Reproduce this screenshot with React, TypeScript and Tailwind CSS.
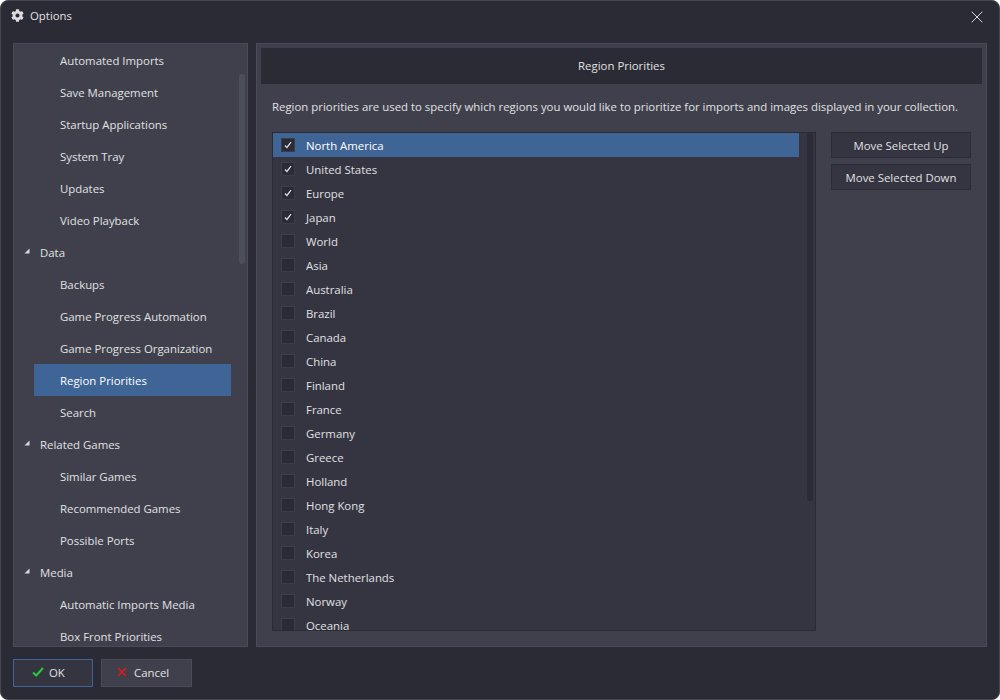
import { X } from "lucide-react";
import { FaCog } from "react-icons/fa";

const tree: { label: string; group?: boolean; selected?: boolean }[] = [
  { label: "Automated Imports" },
  { label: "Save Management" },
  { label: "Startup Applications" },
  { label: "System Tray" },
  { label: "Updates" },
  { label: "Video Playback" },
  { label: "Data", group: true },
  { label: "Backups" },
  { label: "Game Progress Automation" },
  { label: "Game Progress Organization" },
  { label: "Region Priorities", selected: true },
  { label: "Search" },
  { label: "Related Games", group: true },
  { label: "Similar Games" },
  { label: "Recommended Games" },
  { label: "Possible Ports" },
  { label: "Media", group: true },
  { label: "Automatic Imports Media" },
  { label: "Box Front Priorities" },
];

const regions = [
  "North America",
  "United States",
  "Europe",
  "Japan",
  "World",
  "Asia",
  "Australia",
  "Brazil",
  "Canada",
  "China",
  "Finland",
  "France",
  "Germany",
  "Greece",
  "Holland",
  "Hong Kong",
  "Italy",
  "Korea",
  "The Netherlands",
  "Norway",
  "Oceania",
];

function TreeRow({ label, group, selected }: { label: string; group?: boolean; selected?: boolean }) {
  if (group) {
    return (
      <div className="flex h-8 shrink-0 items-center pl-[10px] pt-[1px]">
        <svg width="6" height="6" viewBox="0 0 6 6" className="mr-[10px] mb-[3px]">
          <path d="M5.5 0.5V5.5H0.5Z" fill="#d8d8dc" />
        </svg>
        <span>{label}</span>
      </div>
    );
  }
  return (
    <div className={`ml-[20px] flex h-8 w-[197px] shrink-0 items-center pl-[26px] pt-[1px] ${selected ? "bg-[#3f6496] text-white" : ""}`}>
      {label}
    </div>
  );
}

function RegionRow({ label, checked, selected }: { label: string; checked: boolean; selected: boolean }) {
  return (
    <div className={`flex h-6 w-[526px] shrink-0 items-center pl-[8px] ${selected ? "bg-[#3f6496] text-white" : ""}`}>
      <div className="grid h-[14px] w-[14px] place-items-center border border-[#3c3d49] bg-[#2b2b35]">
        {checked && (
          <svg width="8" height="8" viewBox="0 0 8 8" fill="none">
            <path d="M1 4.5L3 6.5L7 1.2" stroke="#dcdcdf" strokeWidth="1.3" />
          </svg>
        )}
      </div>
      <span className="ml-[11px] pt-[2px]">{label}</span>
    </div>
  );
}

export default function App() {
  return (
    <div className="flex h-[700px] w-[1000px] flex-col overflow-hidden rounded-[8px] border border-[#45464f] bg-[#2b2b35] font-['Open_Sans','Noto_Sans',sans-serif] text-[11.4px] text-[#e0e0e2]">
      {/* Barra de titulo */}
      <div className="flex h-[42px] shrink-0 items-start justify-between pt-[6px] pl-[10px] pr-[12px]">
        <div className="flex items-center gap-[6px]">
          <FaCog size={13} className="text-[#dcdcdf]" />
          <span>Options</span>
        </div>
        <X size={20} strokeWidth={1.1} className="text-[#e8e8ea]" />
      </div>

      <div className="flex h-[604px] shrink-0 gap-[8px] pl-[12px]">
        {/* Arvore */}
        <div className="relative flex h-full w-[235px] shrink-0 flex-col overflow-hidden border border-[#4a4b57] bg-[#3f404c]">
          {tree.map((item) => (
            <TreeRow key={item.label} {...item} />
          ))}
          <div className="absolute left-[225px] top-[30px] h-[190px] w-[6px] rounded-full bg-[#4d4e5b]" />
        </div>

        {/* Painel */}
        <div className="flex h-full w-[731px] shrink-0 flex-col border border-[#4a4b57] bg-[#3f404c] p-[4px]">
          <div className="flex h-[36px] shrink-0 items-center justify-center bg-[#2b2b35]">Region Priorities</div>
          <p className="mt-[14px] ml-[11px] h-[18px] whitespace-nowrap leading-[18px]">
            Region priorities are used to specify which regions you would like to prioritize for imports and images displayed in your collection.
          </p>
          <div className="mt-[16px] ml-[11px] flex gap-[15px]">
            <div className="relative flex h-[499px] w-[544px] shrink-0 flex-col overflow-hidden border border-[#2b2b35] bg-[#343541]">
              {regions.map((r, i) => (
                <RegionRow key={r} label={r} checked={i < 4} selected={i === 0} />
              ))}
              <div className="absolute left-[534px] top-0 h-[368px] w-[6px] rounded-full bg-[#2b2b35]" />
            </div>
            <div className="flex w-[140px] flex-col gap-[6px]">
              <button className="h-[26px] border border-[#2b2b35] bg-[#343541] pt-[1px]">Move Selected Up</button>
              <button className="h-[26px] border border-[#2b2b35] bg-[#343541] pt-[1px]">Move Selected Down</button>
            </div>
          </div>
        </div>
      </div>

      {/* Rodape */}
      <div className="mt-[12px] flex gap-[8px] pl-[12px]">
        <button className="flex h-[28px] w-[80px] items-center border border-[#3f6496] bg-[#343541] pl-[18px]">
          <svg width="12" height="10" viewBox="0 0 12 10" fill="none" className="mr-[5px] mb-[2px]">
            <path d="M1 5.5L4.2 8.5L11 1" stroke="#27c93f" strokeWidth="2" />
          </svg>
          OK
        </button>
        <button className="flex h-[28px] w-[91px] items-center border border-[#4a4b57] bg-[#3f404c] pl-[15px]">
          <svg width="10" height="10" viewBox="0 0 10 10" fill="none" className="mr-[7px] mb-[3px]">
            <path d="M1 1L9 9M9 1L1 9" stroke="#e01818" strokeWidth="1.6" />
          </svg>
          Cancel
        </button>
      </div>
    </div>
  );
}
